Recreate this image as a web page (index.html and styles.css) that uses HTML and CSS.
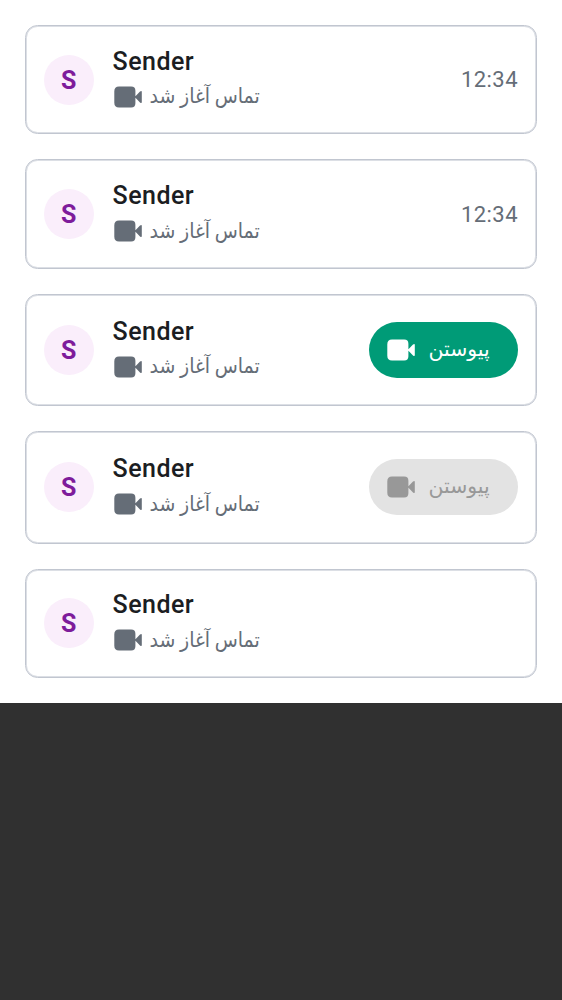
FILE: index.html
```html
<!DOCTYPE html>
<html lang="fa">
<head>
<meta charset="utf-8">
<title>Calls</title>
<link rel="stylesheet" href="styles.css">
</head>
<body>
<svg class="defs" width="0" height="0"><symbol id="video" viewBox="0 0 28 22"><path d="M5 .5H17.2Q21.4 .5 21.4 4.7V17.3Q21.4 21.5 17.2 21.5H5Q.3 21.5 .3 16.8V5.2Q.3 .5 5 .5ZM21.2 10.4L26 5.6Q27.8 4.2 27.8 6V16Q27.8 17.8 26 16.4L21.2 11.6Z"/></symbol></svg>
<main class="list">
<article class="card"><div class="avatar">S</div><div class="info"><div class="name">Sender</div><div class="status"><svg class="icon"><use href="#video"/></svg><span class="label" dir="rtl">تماس آغاز شد</span></div></div><time class="time">12:34</time></article>
<article class="card"><div class="avatar">S</div><div class="info"><div class="name">Sender</div><div class="status"><svg class="icon"><use href="#video"/></svg><span class="label" dir="rtl">تماس آغاز شد</span></div></div><time class="time">12:34</time></article>
<article class="card tall"><div class="avatar">S</div><div class="info"><div class="name">Sender</div><div class="status"><svg class="icon"><use href="#video"/></svg><span class="label" dir="rtl">تماس آغاز شد</span></div></div><button class="join"><svg class="icon"><use href="#video"/></svg><span class="label" dir="rtl">پیوستن</span></button></article>
<article class="card tall"><div class="avatar">S</div><div class="info"><div class="name">Sender</div><div class="status"><svg class="icon"><use href="#video"/></svg><span class="label" dir="rtl">تماس آغاز شد</span></div></div><button class="join" disabled><svg class="icon"><use href="#video"/></svg><span class="label" dir="rtl">پیوستن</span></button></article>
<article class="card"><div class="avatar">S</div><div class="info"><div class="name">Sender</div><div class="status"><svg class="icon"><use href="#video"/></svg><span class="label" dir="rtl">تماس آغاز شد</span></div></div></article>
</main>
</body>
</html>
```
FILE: styles.css
```css
* { box-sizing: border-box; }
body { margin: 0; min-height: 1000px; background: #303030; font-family: Roboto, "DejaVu Sans", sans-serif; }
.defs { display: block; }
.list { display: flex; flex-direction: column; gap: 25px; padding: 25px; height: 703px; background: #fff; }
.card { display: flex; align-items: center; height: 109.4px; padding: 0 18px 0 17.6px; border: 1px solid #c1c6d0; border-radius: 12.5px; box-shadow: inset 0 0 0 1px #dcdfe5; }
.tall { height: 112.4px; }
.avatar { width: 50px; height: 50px; margin-right: 19px; border-radius: 50%; background: #faeefb; color: #7e1c9b; font-size: 25px; font-weight: 700; line-height: 51px; text-align: center; }
.info { flex: 1; padding-bottom: 2px; }
.name { font-size: 25px; font-weight: 500; line-height: 36px; letter-spacing: .45px; color: #1b1d22; }
.status { display: flex; align-items: center; height: 34px; padding-left: 1.5px; gap: 7.5px; color: #656d77; font-size: 19px; }
.icon { width: 28px; height: 22px; flex: none; fill: currentColor; }
.label { padding-bottom: 2px; white-space: nowrap; }
.status .label { font-size: 18.9px; transform: scaleY(1.1); }
.time { font-size: 22px; letter-spacing: .45px; color: #656d77; }
.join { display: flex; align-items: center; gap: 13.5px; width: 149px; height: 56px; padding: 0 18px; border: 0; border-radius: 28px; background: #009b77; color: #fff; font: 400 20.4px Roboto, "DejaVu Sans", sans-serif; }
.join:disabled { background: #e3e3e3; color: #989898; }
```
